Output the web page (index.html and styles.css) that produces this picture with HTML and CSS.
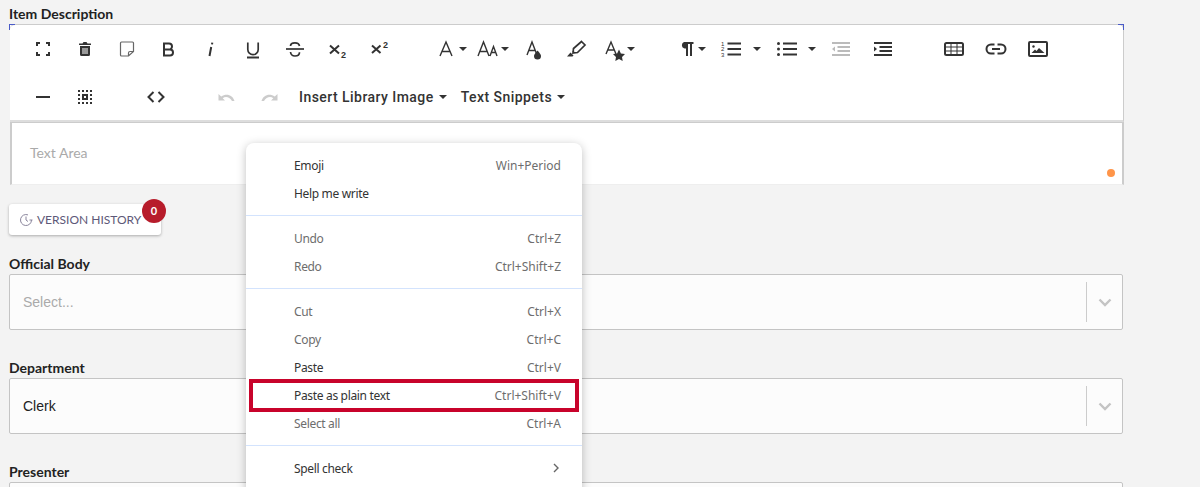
FILE: index.html
```html
<!DOCTYPE html>
<html lang="en">

<head>
    <meta charset="UTF-8">
    <meta name="viewport" content="width=device-width, initial-scale=1.0">
    <title>Item Description</title>
    <link rel="stylesheet" href="styles.css">
</head>

<body>
    <div class="form">
        <label class="label first">Item Description</label>
        <div class="editor">
            <div class="toolbar">
                <div class="row">
                    <!-- fullscreen -->
                    <svg class="ic" viewBox="0 0 24 24"><path class="ln" d="M6 9V6h3M15 6h3v3M18 15v3h-3M9 18H6v-3"/></svg>
                    <!-- trash -->
                    <svg class="ic" viewBox="0 0 24 24"><path class="fl" d="M9.500 6.500 10.500 5h3l1 1.500H18V8H6V6.500zM7 9h10v8.500a1.500 1.500 0 0 1-1.500 1.500h-7A1.500 1.500 0 0 1 7 17.500z"/><path class="cut" d="M10 11v6M12 11v6M14 11v6"/></svg>
                    <!-- sticky note -->
                    <svg class="ic" viewBox="0 0 24 24"><path class="note" d="M6.500 5h11a1 1 0 0 1 1 1v8.500L13.500 19h-7a1 1 0 0 1-1-1V6a1 1 0 0 1 1-1zM18.500 14.500h-3.500a1.500 1.500 0 0 0-1.500 1.500v3"/></svg>
                    <!-- bold -->
                    <svg class="ic" viewBox="0 0 24 24"><path class="ln" d="M7 6.500h5a3 3 0 0 1 0 6H7zM7 12.500h6a3 3 0 0 1 0 6H7z"/></svg>
                    <!-- italic -->
                    <svg class="ic" viewBox="0 0 24 24"><path class="ln" d="M10.500 19 12.200 10M13 7.300l.3-1.700"/></svg>
                    <!-- underline -->
                    <svg class="ic" viewBox="0 0 24 24"><path class="mid" d="M6.800 5.500V12.500a5.200 5.200 0 0 0 10.400 0V5.500"/><path class="ln" d="M6 20.500h12"/></svg>
                    <!-- strikethrough -->
                    <svg class="ic" viewBox="0 0 24 24"><path class="mid" d="M16.500 9c-.3-2-2.200-3.200-4.500-3.200-2.600 0-4.500 1.300-4.500 3.300M7.500 15c.3 2.500 2.200 4 4.500 4 2.600 0 4.500-1.400 4.500-3.800"/><path class="mid" d="M3 12h18"/></svg>
                    <!-- subscript -->
                    <svg class="ic" viewBox="0 0 24 24"><path class="ln" d="m5 8.500 9 8M14 8.500l-9 8"/><text class="idx" x="16" y="21">2</text></svg>
                    <!-- superscript -->
                    <svg class="ic" viewBox="0 0 24 24"><path class="ln" d="m5 8.500 8.500 7.500M13.500 8.500 5 16"/><text class="idx" x="16" y="10.500">2</text></svg>

                    <!-- font family -->
                    <svg class="ic m34" viewBox="0 0 24 24"><path class="thin" d="m6 19 6-14 6 14M8 14.500h8"/></svg><i class="caret c1"></i>
                    <!-- font size -->
                    <svg class="ic m9" viewBox="0 0 24 24"><path class="thin" d="m2 19 5.500-14L13 19M3.800 14.500h7.500M14 19l3.500-9.500L21 19M15 15.500h5"/></svg><i class="caret c1"></i>
                    <!-- text color -->
                    <svg class="ic m13" viewBox="0 0 24 24"><path class="thin" d="m5 18 5-13 5 13M6.500 13.500h7"/><path class="fl" d="M15.500 13.500s3.500 3.500 3.500 5.500a3.500 3.500 0 0 1-7 0c0-2 3.500-5.500 3.500-5.500z"/></svg>
                    <!-- background color -->
                    <svg class="ic m18" viewBox="0 0 24 24"><path class="mid" d="m17.500 4.500 3.500 3.500-7.500 7.500-4.500.5.500-4.500zM10.500 16l-2-2"/><path class="fl" d="m6.500 15.500 3 3-1 1H3z"/></svg>
                    <!-- inline style -->
                    <svg class="ic m15" viewBox="0 0 24 24"><path class="thin" d="m3 17 5-12 5 12M4.500 13h7"/><path class="fl" d="m16 12.500 1.900 3.900 4.100.6-3 3 .7 4-3.700-2-3.700 2 .7-4-3-3 4.100-.6z"/></svg><i class="caret"></i>

                    <!-- paragraph -->
                    <svg class="ic m39" viewBox="0 0 24 24"><path class="fl" d="M10 5h9.500v2h-1.500v12h-2V7h-2v12h-2v-7.500a3.300 3.300 0 0 1-2-.2A3.400 3.400 0 0 1 10 5z"/></svg><i class="caret"></i>
                    <!-- ordered list -->
                    <svg class="ic m13" viewBox="0 0 24 24"><path class="ln" d="M8.500 6.500H22M8.500 12H22M8.500 17.500H22"/><text class="tiny" x="2" y="8.500">1</text><text class="tiny" x="2" y="14">2</text><text class="tiny" x="2" y="19.500">3</text></svg><i class="caret c10"></i>
                    <!-- unordered list -->
                    <svg class="ic m14" viewBox="0 0 24 24"><path class="ln" d="M8 6.500h14M8 12h14M8 17.500h14"/><circle class="fl" cx="3.500" cy="6.500" r="1.500"/><circle class="fl" cx="3.500" cy="12" r="1.500"/><circle class="fl" cx="3.500" cy="17.500" r="1.500"/></svg><i class="caret c9"></i>
                    <!-- outdent -->
                    <svg class="ic m13 off" viewBox="0 0 24 24"><path class="ln" d="M3 6h18M8.500 10h12.500M8.500 14h12.500M3 18h18"/><path class="fl" d="M6 9.500v5L3 12z"/></svg>
                    <!-- indent -->
                    <svg class="ic m18" viewBox="0 0 24 24"><path class="ln" d="M3 6h18M8.500 10h12.500M8.500 14h12.500M3 18h18"/><path class="fl" d="M3 9.500v5l3-2.500z"/></svg>

                    <!-- table -->
                    <svg class="ic m47" viewBox="0 0 24 24"><rect class="box2" x="3" y="6" width="18" height="12" rx="1.500"/><path class="hair" d="M3 10h18M3 14h18M9 6v12M15 6v12"/></svg>
                    <!-- link -->
                    <svg class="ic m18" viewBox="0 0 24 24"><path class="ln" d="M10.500 7.500H7a4.500 4.500 0 0 0 0 9h3.500M13.500 7.500H17a4.500 4.500 0 0 1 0 9h-3.500M8 12h8"/></svg>
                    <!-- image -->
                    <svg class="ic m18" viewBox="0 0 24 24"><rect class="box2" x="3" y="5" width="18" height="14" rx="1"/><circle class="fl" cx="7.500" cy="9.500" r="1.200"/><path class="fl" d="m5.500 16 3.500-3.500 1.500 1.500 2.500-3 5.500 5z"/></svg>
                </div>
                <div class="row">
                    <!-- horizontal line -->
                    <svg class="ic" viewBox="0 0 24 24"><path class="ln" d="M5 12h14"/></svg>
                    <!-- select all -->
                    <svg class="ic" viewBox="0 0 24 24"><path class="dots" d="M5 6h14M5 18h14M6 9v6M18 9v6"/><rect class="box2" x="10" y="10" width="4" height="4"/></svg>
                    <!-- code view -->
                    <svg class="ic m38" viewBox="0 0 24 24"><path class="ln" d="M9.500 7 4.500 12l5 5M14.500 7l5 5-5 5"/></svg>
                    <!-- undo -->
                    <svg class="ic m47 off2" viewBox="0 0 24 24"><path class="fl" d="M3.500 9v6.500H10l-2.300-2.300c2.800-2 7-1.300 9.300 2.800h2.500c-1.500-5.700-8-8.300-13.300-4.400z"/></svg>
                    <!-- redo -->
                    <svg class="ic m18 off2" viewBox="0 0 24 24"><path class="fl" d="M20.500 9v6.500H14l2.300-2.300c-2.800-2-7-1.300-9.300 2.800H4.500c1.500-5.700 8-8.300 13.300-4.400z"/></svg>
                    <span class="drop first-drop">Insert Library Image</span><i class="caret c5"></i>
                    <span class="drop second-drop">Text Snippets</span><i class="caret c5"></i>
                </div>
            </div>
            <div class="text-area">
                <span class="placeholder">Text Area</span>
                <span class="dot"></span>
            </div>
        </div>

        <div class="history-wrap">
            <button class="history">
                <svg class="clock" viewBox="0 0 14 14"><path d="M12.500 7A5.500 5.500 0 1 1 9 1.900M7 3.500V7l2 1.500M10.500 7h3"/></svg>
                VERSION HISTORY
            </button>
            <span class="badge">0</span>
        </div>

        <label class="label">Official Body</label>
        <div class="select">
            <span class="value muted">Select...</span>
            <span class="sep"></span>
            <svg class="chev" viewBox="0 0 14 14"><path d="m1.500 4.500 5.500 5.500 5.500-5.500"/></svg>
        </div>

        <label class="label">Department</label>
        <div class="select">
            <span class="value">Clerk</span>
            <span class="sep"></span>
            <svg class="chev" viewBox="0 0 14 14"><path d="m1.500 4.500 5.500 5.500 5.500-5.500"/></svg>
        </div>

        <label class="label">Presenter</label>
        <div class="select"></div>
    </div>

    <ul class="menu">
        <li class="on"><span>Emoji</span><span class="key">Win+Period</span></li>
        <li class="on"><span>Help me write</span></li>
        <li class="line"></li>
        <li><span>Undo</span><span class="key">Ctrl+Z</span></li>
        <li><span>Redo</span><span class="key">Ctrl+Shift+Z</span></li>
        <li class="line"></li>
        <li><span>Cut</span><span class="key">Ctrl+X</span></li>
        <li><span>Copy</span><span class="key">Ctrl+C</span></li>
        <li class="on"><span>Paste</span><span class="key">Ctrl+V</span></li>
        <li class="on"><span>Paste as plain text</span><span class="key">Ctrl+Shift+V</span></li>
        <li><span>Select all</span><span class="key">Ctrl+A</span></li>
        <li class="line"></li>
        <li class="on"><span>Spell check</span><svg class="more" viewBox="0 0 10 10"><path d="m3 1 4 4-4 4"/></svg></li>
    </ul>
    <div class="mark"></div>
</body>

</html>
```

FILE: styles.css
```css
* {
    margin: 0;
    padding: 0;
    list-style: none;
    box-sizing: border-box;
}

html,
body {
    height: 487px;
    overflow: hidden;
}

body {
    position: relative;
    background-color: #f3f3f3;
    font-family: "Lato", "Liberation Sans", sans-serif;
    color: #222;
}

.form {
    width: 1124px;
    padding-left: 9px;
}

.label {
    display: block;
    margin-top: 29px;
    height: 19px;
    font-size: 14px;
    font-weight: 700;
    line-height: 17px;
    color: #222;
}

.label.first {
    margin-top: 5px;
}

/* editor */
.editor {
    margin-left: 1px;
    background-color: #fff;
}

.toolbar {
    position: relative;
    height: 98px;
    border-top: 1px solid #ccc;
    border-right: 1px solid #ccc;
    border-bottom: 2px solid #ddd;
    border-radius: 5px 5px 0 0;
}

.toolbar::before,
.toolbar::after {
    content: "";
    position: absolute;
    top: -1px;
    width: 5px;
    height: 5px;
    border-top: 1px solid #4a5bc8;
}

.toolbar::before {
    left: -1px;
    border-left: 1px solid #4a5bc8;
}

.toolbar::after {
    right: -1px;
    border-right: 1px solid #4a5bc8;
}

.row {
    display: flex;
    align-items: center;
    height: 48px;
    padding-left: 12px;
}

.ic {
    flex: none;
    width: 24px;
    height: 24px;
    margin: 0 9px;
}

.ic[class*=" m"] {
    margin-right: 0;
}

.m9 { margin-left: 9px; }
.m13 { margin-left: 13px; }
.m14 { margin-left: 14px; }
.m15 { margin-left: 15px; }
.m18 { margin-left: 18px; }
.m34 { margin-left: 34px; }
.m38 { margin-left: 38px; }
.m39 { margin-left: 39px; }
.m47 { margin-left: 47px; }

.ln,
.thin,
.mid,
.note,
.box2,
.hair,
.cut,
.dots {
    fill: none;
    stroke: #333;
    stroke-width: 2;
}

.thin { stroke-width: 1.4; }
.mid { stroke-width: 1.7; }
.note { stroke: #666; stroke-width: 1.2; }
.hair { stroke-width: 1; }
.cut { stroke: #fff; stroke-width: 1; }
.dots { stroke-dasharray: 2 2; }
.fl { fill: #333; }

.off .ln { stroke: #bbb; }
.off .fl { fill: #bbb; }
.off2 .fl { fill: #ccc; }

.idx {
    font-family: "Liberation Sans", sans-serif;
    font-size: 9px;
    font-weight: 700;
    fill: #333;
}

.tiny {
    font-family: "Liberation Sans", sans-serif;
    font-size: 6px;
    fill: #333;
}

.caret {
    flex: none;
    width: 0;
    height: 0;
    margin-top: -1px;
    border-left: 4px solid transparent;
    border-right: 4px solid transparent;
    border-top: 4px solid #333;
}

.c1 { margin-left: 1px; }
.c5 { margin-left: 5px; }
.c9 { margin-left: 9px; }
.c10 { margin-left: 10px; }

.drop {
    font-family: "Roboto", "Liberation Sans", sans-serif;
    font-size: 14px;
    font-weight: 500;
    letter-spacing: .45px;
    color: #333;
}

.first-drop { margin-left: 18px; }
.second-drop { margin-left: 14px; }

.text-area {
    position: relative;
    height: 63px;
    padding: 19px 18px;
    border-top: 1px solid #ccc;
    border-left: 2px solid #ccc;
    border-right: 2px solid #ccc;
    border-bottom: 1px solid #eee;
}

.placeholder {
    font-size: 14px;
    line-height: 18px;
    color: #aaa;
}

.dot {
    position: absolute;
    right: 7px;
    bottom: 7px;
    width: 8px;
    height: 8px;
    border-radius: 50%;
    background-color: #ff9549;
}

/* version history */
.history-wrap {
    position: relative;
    width: 152px;
    margin-top: 19px;
}

.history {
    display: flex;
    align-items: center;
    gap: 4px;
    width: 152px;
    height: 31px;
    padding-left: 10px;
    border: 0;
    border-radius: 3px;
    background-color: #fff;
    box-shadow: 0 1px 3px rgba(0, 0, 0, .3);
    font-family: "Lato", "Liberation Sans", sans-serif;
    font-size: 12px;
    color: #5d5878;
}

.clock {
    width: 14px;
    height: 14px;
    fill: none;
    stroke: #8a859c;
    stroke-width: 1;
}

.badge {
    position: absolute;
    top: -5px;
    left: 133px;
    width: 24px;
    height: 24px;
    border-radius: 50%;
    background-color: #b71c2b;
    color: #fff;
    font-size: 11px;
    font-weight: 700;
    line-height: 24px;
    text-align: center;
}

.history-wrap + .label {
    margin-top: 20px;
}

/* selects */
.select {
    display: flex;
    align-items: center;
    width: 1114px;
    height: 56px;
    padding-left: 13px;
    border: 1px solid #c4c4c4;
    border-radius: 2px;
    background-color: #fcfcfc;
}

.value {
    flex: 1;
    font-family: "Liberation Sans", sans-serif;
    font-size: 14px;
    color: #222;
}

.muted {
    color: #aaa;
}

.sep {
    width: 1px;
    height: 40px;
    background-color: #ccc;
}

.chev {
    width: 14px;
    height: 14px;
    margin: 0 10px 0 11px;
    fill: none;
    stroke: #c4c4c4;
    stroke-width: 2.4;
}

/* context menu */
.menu {
    position: absolute;
    top: 143px;
    left: 246px;
    width: 336px;
    padding: 9px 0 40px;
    border-radius: 8px;
    background-color: #fff;
    box-shadow: 0 2px 10px rgba(0, 0, 0, .25);
    font-family: "Noto Sans", "Liberation Sans", sans-serif;
    font-size: 12px;
    letter-spacing: -.33px;
    color: #6d6d6d;
}

.menu li {
    display: flex;
    align-items: center;
    justify-content: space-between;
    height: 28px;
    padding: 0 21px 2px 48px;
}

.menu li.on {
    color: #333;
}

.menu li.line {
    height: 1px;
    margin: 7px 0 9px;
    padding: 0;
    background-color: #d3e3fd;
}

.key {
    letter-spacing: 0;
    color: #6d6d6d;
}

.more {
    width: 10px;
    height: 10px;
    fill: none;
    stroke: #666;
    stroke-width: 1.4;
}

.mark {
    position: absolute;
    top: 379px;
    left: 249px;
    width: 330px;
    height: 33px;
    border: 4px solid #c8032b;
}
```
